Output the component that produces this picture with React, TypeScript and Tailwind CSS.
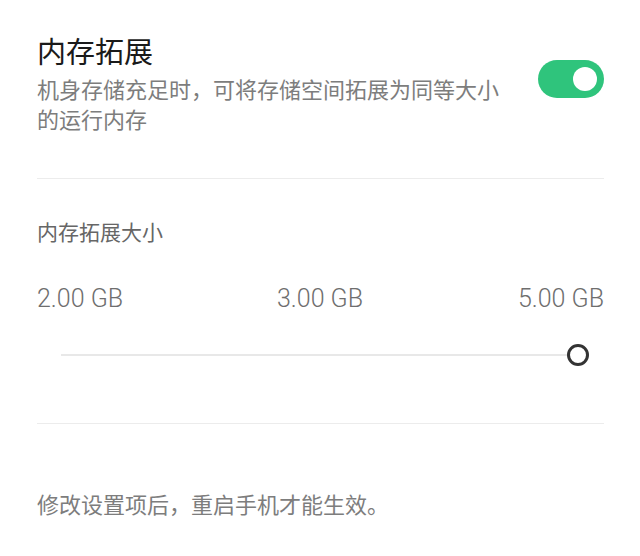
export default function App() {
  return (
    <div
      className="w-[640px] h-[556px] bg-white pl-[37px] pr-[36px] overflow-hidden"
      style={{ fontFamily: '"Noto Sans CJK SC", "Noto Sans", sans-serif' }}
    >
      {/* Memory extension toggle */}
      <div className="flex pt-[32px] pb-[45px] border-b border-[#ececec]">
        <div className="w-[472px]">
          <div className="text-[29px] leading-[36px] text-[#1a1a1a]">内存拓展</div>
          <div className="mt-[5px] text-[22px] leading-[30px] text-[#7d7d7d]">
            机身存储充足时，可将存储空间拓展为同等大小的运行内存
          </div>
        </div>
        <div className="ml-auto mt-[28px] w-[66px] h-[38px] rounded-full bg-[#2fc47c] flex items-center justify-end pr-[7px]">
          <div className="w-[24px] h-[24px] rounded-full bg-white" />
        </div>
      </div>

      {/* Size selector */}
      <div className="pt-[37px] pb-[53px] border-b border-[#ececec]">
        <div className="text-[21px] leading-[30px] text-[#666666]">内存拓展大小</div>
        <div
          className="mt-[38px] flex justify-between text-[25px] leading-[30px] font-light text-[#6e6e6e]"
          style={{ fontFamily: "Roboto, sans-serif" }}
        >
          <span>2.00 GB</span>
          <span className="mr-[1px]">3.00 GB</span>
          <span>5.00 GB</span>
        </div>
        <div className="mt-[26px] h-[30px] flex items-center pl-[24px] pr-[15px]">
          <div className="flex-1 h-[2px] bg-[#e8e8e8]" />
          <div className="w-[22px] h-[22px] rounded-full border-[3.5px] border-[#333333] bg-white -ml-[2px]" />
        </div>
      </div>

      <div className="pt-[64px] text-[22px] leading-[30px] text-[#7d7d7d]">
        修改设置项后，重启手机才能生效。
      </div>
    </div>
  );
}
